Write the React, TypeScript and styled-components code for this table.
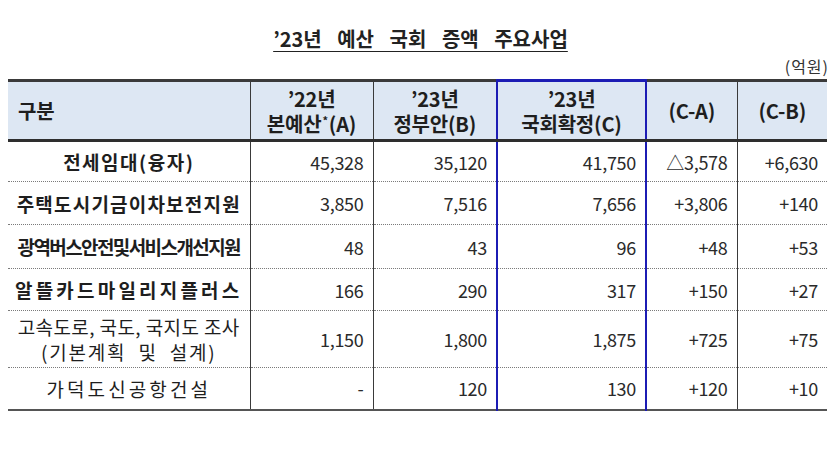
import React from "react";
import styled, { createGlobalStyle } from "styled-components";

const Global = createGlobalStyle`
  html, body { margin: 0; padding: 0; background: #ffffff; }
  body { font-family: "Noto Sans CJK KR", "Noto Sans", sans-serif; color: #222; }
`;

const Page = styled.div`
  width: 835px;
  height: 460px;
  box-sizing: border-box;
  padding: 26px 8px 0 8px;
  display: flex;
  flex-direction: column;
`;

const Title = styled.h1`
  margin: 0;
  align-self: center;
  font-size: 20px;
  font-weight: 700;
  line-height: 26px;
  word-spacing: 11px;
  text-decoration: underline;
  text-underline-offset: 4px;
  text-decoration-thickness: 1px;
  color: #222;
  margin-left: 6px;
`;

const Unit = styled.div`
  align-self: flex-end;
  font-size: 16px;
  line-height: 20px;
  margin-top: 4px;
  color: #333;
  letter-spacing: 1px;
  margin-right: -2px;
`;

const Table = styled.table`
  border-collapse: collapse;
  table-layout: fixed;
  width: 819px;
  margin-top: 3px;
  border-top: 3px solid #3a3a3a;
  border-bottom: 2px solid #555;
`;

const HeadRow = styled.tr`
  height: 60px;
  background: #dde7f3;
  border-bottom: 3px solid #2e2e2e;
`;

const Row = styled.tr<{ $h: number; $last?: boolean }>`
  height: ${(p) => p.$h}px;
  border-bottom: ${(p) => (p.$last ? "none" : "1px dotted #7a7a7a")};
`;

const HeadCell = styled.th<{ $left?: boolean; $blue?: boolean }>`
  padding: ${(p) => (p.$left ? "0 0 0 10px" : "0")};
  text-align: ${(p) => (p.$left ? "left" : "center")};
  font-size: 20px;
  font-weight: 700;
  line-height: 25px;
  color: #1e1e1e;
  letter-spacing: -0.2px;
  border-left: ${(p) => (p.$left ? "none" : p.$blue ? "2px solid #1c1cb4" : "1.5px solid #3a3a3a")};
  border-right: ${(p) => (p.$blue ? "2px solid #1c1cb4" : "none")};
  border-top: ${(p) => (p.$blue ? "3px solid #1c1cb4" : "none")};
`;

const Sup = styled.sup`
  font-size: 11px;
  vertical-align: 7px;
  line-height: 0;
  margin: 0 1px;
`;

const NameCell = styled.td<{ $bold?: boolean; $ls: number }>`
  padding: 0;
  text-align: center;
  font-size: 19px;
  font-weight: ${(p) => (p.$bold ? 700 : 400)};
  letter-spacing: ${(p) => p.$ls}px;
  line-height: 25px;
  white-space: nowrap;
  color: #1e1e1e;
`;

const SubLine = styled.span`
  letter-spacing: 1.8px;
  word-spacing: 6px;
`;

const NumCell = styled.td<{ $blue?: boolean }>`
  padding: 0 9px 0 0;
  text-align: right;
  font-size: 18px;
  font-weight: 400;
  color: #2a2a2a;
  letter-spacing: -0.3px;
  border-left: ${(p) => (p.$blue ? "2px solid #1c1cb4" : "1.5px solid #3a3a3a")};
  border-right: ${(p) => (p.$blue ? "2px solid #1c1cb4" : "none")};
`;

type Item = {
  name: React.ReactNode;
  bold: boolean;
  ls: number;
  h: number;
  vals: string[];
};

const rows: Item[] = [
  { name: "전세임대(융자)", bold: true, ls: 1.5, h: 41, vals: ["45,328", "35,120", "41,750", "△3,578", "+6,630"] },
  { name: "주택도시기금이차보전지원", bold: true, ls: 1.2, h: 43, vals: ["3,850", "7,516", "7,656", "+3,806", "+140"] },
  { name: "광역버스안전및서비스개선지원", bold: true, ls: -1.6, h: 44, vals: ["48", "43", "96", "+48", "+53"] },
  { name: "알뜰카드마일리지플러스", bold: true, ls: 3.2, h: 42, vals: ["166", "290", "317", "+150", "+27"] },
  {
    name: (
      <>
        고속도로, 국도, 국지도 조사
        <br />
        <SubLine>(기본계획 및 설계)</SubLine>
      </>
    ),
    bold: false,
    ls: 0.4,
    h: 57,
    vals: ["1,150", "1,800", "1,875", "+725", "+75"],
  },
  { name: "가덕도신공항건설", bold: false, ls: 3.1, h: 42, vals: ["-", "120", "130", "+120", "+10"] },
];

export default function App() {
  return (
    <>
      <Global />
      <Page>
        <Title>’23년 예산 국회 증액 주요사업</Title>
        <Unit>(억원)</Unit>
        <Table>
          <colgroup>
            <col style={{ width: 242 }} />
            <col style={{ width: 123 }} />
            <col style={{ width: 124 }} />
            <col style={{ width: 149 }} />
            <col style={{ width: 91 }} />
            <col style={{ width: 90 }} />
          </colgroup>
          <thead>
            <HeadRow>
              <HeadCell $left>구분</HeadCell>
              <HeadCell>
                ’22년
                <br />
                본예산<Sup>*</Sup>(A)
              </HeadCell>
              <HeadCell>
                ’23년
                <br />
                정부안(B)
              </HeadCell>
              <HeadCell $blue>
                ’23년
                <br />
                국회확정(C)
              </HeadCell>
              <HeadCell>(C-A)</HeadCell>
              <HeadCell>(C-B)</HeadCell>
            </HeadRow>
          </thead>
          <tbody>
            {rows.map((r, i) => (
              <Row key={i} $h={r.h} $last={i === rows.length - 1}>
                <NameCell $bold={r.bold} $ls={r.ls}>
                  {r.name}
                </NameCell>
                {r.vals.map((v, j) => (
                  <NumCell key={j} $blue={j === 2}>
                    {v}
                  </NumCell>
                ))}
              </Row>
            ))}
          </tbody>
        </Table>
      </Page>
    </>
  );
}
